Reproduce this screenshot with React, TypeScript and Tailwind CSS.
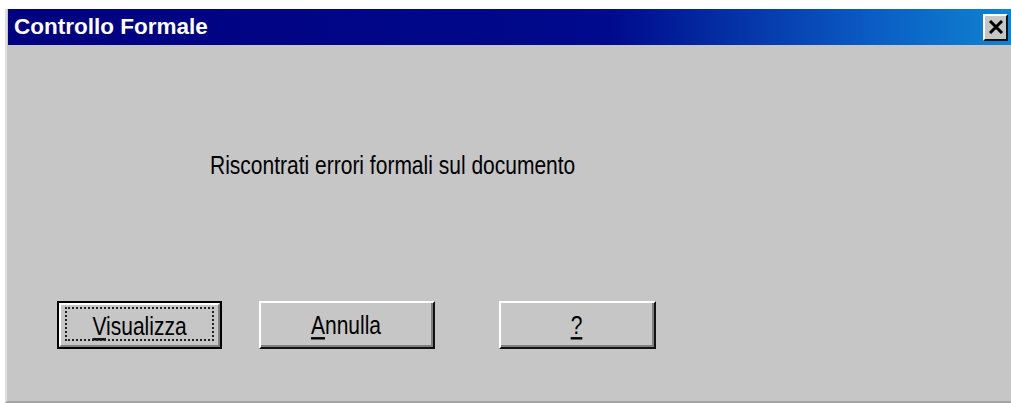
import React from "react";

// MS Sans Serif look: Arial metrics, stretched a bit taller
const dlgFont = "font-['Liberation_Sans',Arial,sans-serif] text-[21px] leading-[25px] inline-block scale-y-[1.2]";

type DialogButtonProps = {
  label: string;
  mnemonic: string; // first char, drawn underlined
  width: string;
  isDefault?: boolean;
};

function Caption({ label, mnemonic }: { label: string; mnemonic: string }) {
  return (
    <span className={`${dlgFont} text-black`}>
      <span className="underline decoration-[1.5px] underline-offset-[3px]">{mnemonic}</span>
      {label.slice(mnemonic.length)}
    </span>
  );
}

function DialogButton({ label, mnemonic, width, isDefault }: DialogButtonProps) {
  if (!isDefault) {
    return (
      <div className={`${width} h-[48px]`}>
        <div className="h-full border-2 border-t-white border-l-white border-r-[#111] border-b-[#111] bg-[#c6c6c6]">
          <div className="flex h-full items-center justify-center border-r-2 border-b-2 border-[#808080]">
            <Caption label={label} mnemonic={mnemonic} />
          </div>
        </div>
      </div>
    );
  }

  // default button: extra black frame plus dotted focus rectangle
  return (
    <div className={`${width} relative h-[48px] border-2 border-black`}>
      <div className="h-full border-2 border-t-white border-l-white border-r-[#808080] border-b-[#808080] bg-[#c6c6c6]">
        <div className="flex h-full items-center justify-center">
          <Caption label={label} mnemonic={mnemonic} />
        </div>
      </div>
      <div className="pointer-events-none absolute top-[4px] right-[6px] bottom-[6px] left-[6px] border-2 border-dotted border-[#222]" />
    </div>
  );
}

export default function App() {
  return (
    <div className="h-[403px] w-[1011px] overflow-hidden bg-white pt-[9px] pl-[5px]">
      <div className="flex h-[394px] flex-col border-l-2 border-b-2 border-l-[#dedede] border-b-[#a4a4a4] bg-[#c6c6c6]">
        {/* caption */}
        <div className="ml-px flex h-[36px] shrink-0 items-center justify-between bg-[linear-gradient(90deg,#000080_0%,#000a8c_60%,#0a5cc4_86%,#1084d0_100%)] pr-[3px] pl-[6px]">
          <span className="font-['Liberation_Sans',Arial,sans-serif] text-[22.5px] leading-none font-bold text-white">
            Controllo Formale
          </span>
          <div className="flex h-[27px] w-[25px] items-center justify-center border-2 border-t-white border-l-white border-r-[#111] border-b-[#111] bg-[#c6c6c6]">
            <svg width="16" height="14" viewBox="0 0 16 14">
              <path d="M2 1 L14 13 M14 1 L2 13" stroke="#000" strokeWidth="3" />
            </svg>
          </div>
        </div>

        {/* message */}
        <div className="mt-[107px] ml-[203px]">
          <span className={`${dlgFont} text-black`}>Riscontrati errori formali sul documento</span>
        </div>

        {/* actions */}
        <div className="mt-[123px] ml-[50px] flex items-start">
          <DialogButton label="Visualizza" mnemonic="V" width="w-[165px]" isDefault />
          <div className="ml-[37px]">
            <DialogButton label="Annulla" mnemonic="A" width="w-[176px]" />
          </div>
          <div className="ml-[64px]">
            <DialogButton label="?" mnemonic="?" width="w-[157px]" />
          </div>
        </div>
      </div>
    </div>
  );
}
